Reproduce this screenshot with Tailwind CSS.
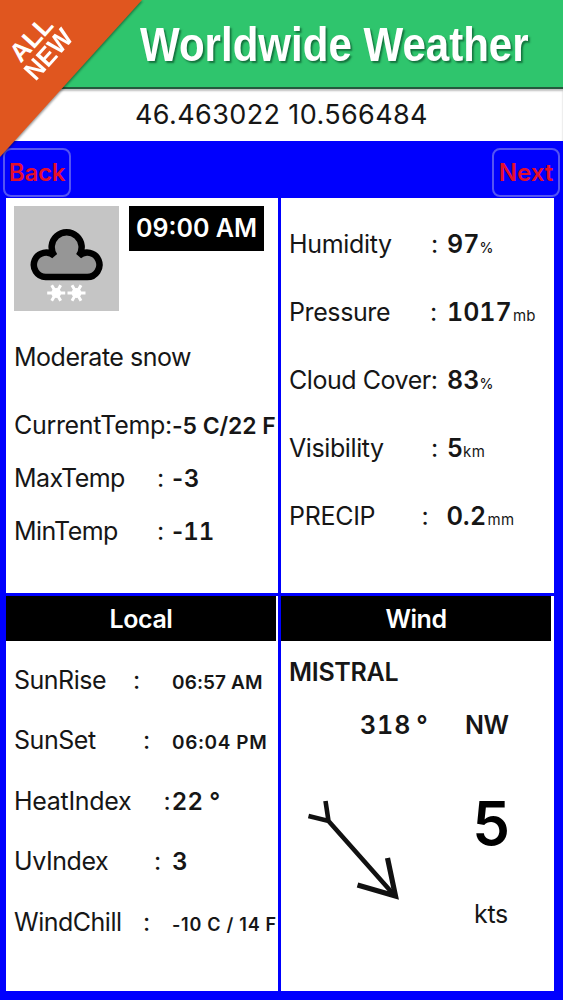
<!DOCTYPE html>
<html lang="en">
<head>
<meta charset="utf-8">
<title>Worldwide Weather</title>
<script src="https://cdn.jsdelivr.net/npm/@tailwindcss/browser@4"></script>
</head>
<body class="relative flex h-[1000px] w-[563px] flex-col overflow-hidden bg-[#0000fe] font-['Inter',sans-serif] text-[25px] text-[#161616]">
  <header class="flex h-[89px] shrink-0 items-center border-b-2 border-[#24593d] bg-[#2fc56d] pl-[140px] pt-[2px]">
    <h1 class="origin-left scale-x-[.876] whitespace-nowrap font-['Liberation_Sans',sans-serif] text-[48px] font-bold leading-[85px] text-white [text-shadow:2px_2px_2px_rgba(0,60,30,.6)]">Worldwide Weather</h1>
  </header>
  <div class="flex h-[52px] shrink-0 items-center justify-center whitespace-nowrap bg-white text-[27px] tracking-[.38px] shadow-[inset_0_2px_2px_rgba(0,0,0,.25)]">46.463022 10.566484</div>
  <nav class="flex h-[57px] shrink-0 items-center justify-between pl-[3px] pr-[3px] pt-[6px] text-[24px] font-semibold text-[#e40f2c]">
    <button class="h-[49px] w-[68px] rounded-[8px] border-2 border-[#5454f2] tracking-[-.2px]">Back</button>
    <button class="h-[49px] w-[68px] rounded-[8px] border-2 border-[#5454f2]">Next</button>
  </nav>
  <main class="grid shrink-0 grid-cols-[272px_273px] grid-rows-[395px_395px] gap-[3px] pl-[6px] whitespace-nowrap">
    <section class="bg-white pt-[8px] pl-[8px]">
      <div class="flex gap-[10px]">
        <svg class="size-[105px] bg-[#c5c5c5]" viewBox="0 0 105 105">
          <path d="M31.7 71A12.2 12.2 0 1 1 40.5 50A15 15 0 1 1 64.8 50A12.2 12.2 0 1 1 73.3 71Z" fill="#969696" stroke="#000" stroke-width="6.5"/>
          <g stroke="#fff" stroke-width="3" fill="#fff">
            <path d="M33.2 87H51.2M37.7 79.2L46.7 94.8M46.7 79.2L37.7 94.8"/><circle cx="42.2" cy="87" r="3.4"/>
            <path d="M53.5 87H71.5M58 79.2L67 94.8M67 79.2L58 94.8"/><circle cx="62.5" cy="87" r="3.4"/>
          </g>
        </svg>
        <div class="flex h-[45px] w-[135px] items-center justify-center bg-black pt-px font-semibold text-white">09:00 AM</div>
      </div>
      <div class="mt-[20px] h-[53px] leading-[53px] tracking-[-.5px]">Moderate snow</div>
      <div class="mt-[15px] flex h-[53px] items-baseline leading-[53px]"><span class="w-[158px] tracking-[-.32px]">CurrentTemp:</span><span class="text-[23px] font-semibold tracking-[-.1px]">-5 C/22 F</span></div>
      <div class="flex h-[53px] items-baseline leading-[53px]"><span class="w-[143px] tracking-[-.56px]">MaxTemp</span><span class="w-[15px]">:</span><span class="text-[24px] font-semibold tracking-[.7px]">-3</span></div>
      <div class="flex h-[53px] items-baseline leading-[53px]"><span class="w-[143px] tracking-[-.56px]">MinTemp</span><span class="w-[15px]">:</span><span class="text-[24px] font-semibold">-<span class="tabular-nums">11</span></span></div>
    </section>
    <section class="bg-white pt-[12px] pl-[8px]">
      <div class="flex h-[68px] items-baseline leading-[68px]"><span class="w-[142px] tracking-[-.34px]">Humidity</span><span class="w-[16px]">:</span><span class="w-[32.5px] font-semibold tabular-nums">97</span><span class="text-[14px] font-medium tracking-[-1px]">%</span></div>
      <div class="flex h-[68px] items-baseline leading-[68px]"><span class="w-[141px] tracking-[-.39px]">Pressure</span><span class="w-[17px]">:</span><span class="w-[66px] font-semibold tabular-nums">1017</span><span class="text-[15px]">mb</span></div>
      <div class="flex h-[68px] items-baseline leading-[68px]"><span class="w-[158px] tracking-[-.45px]">Cloud Cover:</span><span class="w-[32.5px] font-semibold tabular-nums">83</span><span class="text-[14px] font-medium tracking-[-1px]">%</span></div>
      <div class="flex h-[68px] items-baseline leading-[68px]"><span class="w-[142px] tracking-[-.4px]">Visibility</span><span class="w-[16px]">:</span><span class="w-[16px] font-semibold">5</span><span class="text-[15px] tracking-[.4px]">km</span></div>
      <div class="flex h-[68px] items-baseline leading-[68px]"><span class="w-[132.5px] tracking-[-.3px]">PRECIP</span><span class="w-[25px]">:</span><span class="w-[41px] font-semibold">0.2</span><span class="text-[15px] tracking-[.4px]">mm</span></div>
    </section>
    <section class="bg-white">
      <h2 class="mr-[2px] h-[45px] bg-black text-center font-semibold leading-[47px] tracking-[-.4px] text-white">Local</h2>
      <div class="pt-[9px] pl-[8px]">
        <div class="flex h-[60.5px] items-baseline leading-[60px]"><span class="w-[119px] tracking-[-.49px]">SunRise</span><span class="w-[39px]">:</span><span class="text-[19px] font-semibold tracking-[.1px]">06:57 AM</span></div>
        <div class="flex h-[60.5px] items-baseline leading-[59px]"><span class="w-[129px] tracking-[-.44px]">SunSet</span><span class="w-[29px]">:</span><span class="text-[19px] font-semibold tracking-[.6px]">06:04 PM</span></div>
        <div class="flex h-[60.5px] items-baseline leading-[60px]"><span class="w-[149.5px] tracking-[-.3px]">HeatIndex</span><span class="w-[8.5px]">:</span><span class="text-[24px] font-semibold tracking-[.8px] [word-spacing:-1px]">22 °</span></div>
        <div class="flex h-[60.5px] items-baseline leading-[59px]"><span class="w-[140px] tracking-[-.43px]">UvIndex</span><span class="w-[18px]">:</span><span class="text-[24px] font-semibold">3</span></div>
        <div class="flex h-[60.5px] items-baseline leading-[60px]"><span class="w-[129px] tracking-[-.49px]">WindChill</span><span class="w-[29px]">:</span><span class="text-[18px] font-semibold tracking-[.72px]">-10 C / 14 F</span></div>
      </div>
    </section>
    <section class="bg-white">
      <h2 class="mr-[3px] h-[45px] bg-black text-center font-semibold leading-[47px] tracking-[-.45px] text-white">Wind</h2>
      <div class="pl-[8px] pt-[5px] font-semibold">
        <div class="h-[53px] leading-[53px] tracking-[-.3px]">MISTRAL</div>
        <div class="flex h-[53px] pl-[71px] leading-[53px]"><span class="w-[105px] tabular-nums tracking-[.9px] [word-spacing:-2.5px]">318 °</span><span class="tracking-[-.4px]">NW</span></div>
      </div>
      <div class="flex pt-[42px] pl-[19px]">
        <svg class="h-[120px] w-[110px] shrink-0" viewBox="300 794 110 120" fill="none" stroke="#111" stroke-width="4.6">
          <path d="M325.5 801L328.5 821L308.5 816M328.5 821L395 896"/>
          <path d="M387.5 858L395.5 896L357.5 885" stroke-width="5.2"/>
        </svg>
        <div class="flex w-[162px] shrink-0 flex-col items-center text-center">
          <div class="h-[60px] text-[60px] font-semibold leading-[58px] text-black">5</div>
          <div class="mt-[45px] leading-[30px] tracking-[-.3px]">kts</div>
        </div>
      </div>
    </section>
  </main>
  <svg class="absolute left-0 top-0 h-[165px] w-[150px] drop-shadow-[1px_1px_1px_rgba(0,0,0,.4)]" viewBox="0 0 150 165"><path d="M0 0H142L0 157Z" fill="#e0561f"/></svg>
  <div class="absolute left-0 top-[24px] flex w-[80px] -rotate-[48deg] flex-col items-center text-center font-['Liberation_Sans',sans-serif] text-[26px] font-bold leading-[23px] text-white"><span>ALL</span><span class="scale-x-[.96]">NEW</span></div>
</body>
</html>
